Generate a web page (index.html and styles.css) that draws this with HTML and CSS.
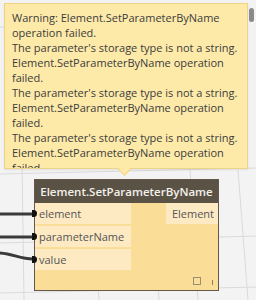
FILE: index.html
```html
<!DOCTYPE html>
<html lang="en">
<head>
  <meta charset="UTF-8" />
  <title>Element.SetParameterByName</title>
  <link rel="stylesheet" href="styles.css">
</head>
<body>
  <div class="canvas">
    <!-- grid + wires -->
    <svg class="wires" width="256" height="300" viewBox="0 0 256 300">
      <g stroke="#dadada" stroke-width="1" fill="none">
        <path d="M0 27 L4 27"/>
        <path d="M0 174 L256 168"/>
        <path d="M0 243 L256 236"/>
        <path d="M0 293 L256 287"/>
        <path d="M22 160 L24 300"/>
        <path d="M97 270 L99 300"/>
        <path d="M157 270 L159 300"/>
        <path d="M190 170 L198 300"/>
        <path d="M238 170 L248 300"/>
      </g>
      <g stroke="#3a3a3a" stroke-width="3" fill="none">
        <path d="M0 214 L33 214"/>
        <path d="M0 237 L33 237"/>
        <path d="M0 253 C14 254 20 259 33 259"/>
      </g>
    </svg>

    <div class="tooltip">
      <div class="tooltip-text">
        Warning: Element.SetParameterByName<br>
        operation failed.<br>
        The parameter's storage type is not a string.<br>
        Element.SetParameterByName operation<br>
        failed.<br>
        The parameter's storage type is not a string.<br>
        Element.SetParameterByName operation<br>
        failed.<br>
        The parameter's storage type is not a string.<br>
        Element.SetParameterByName operation<br>
        failed.
      </div>
      <div class="scroll-thumb"></div>
    </div>

    <div class="node">
      <div class="node-title">Element.SetParameterByName</div>
      <div class="node-body">
        <div class="inputs">
          <div class="port in">element</div>
          <div class="port in">parameterName</div>
          <div class="port in">value</div>
        </div>
        <div class="outputs">
          <div class="port out">Element</div>
        </div>
      </div>
      <div class="node-foot">
        <span class="preview-box"></span>
        <span class="lacing"></span>
      </div>
    </div>
  </div>
</body>
</html>
```

FILE: styles.css
```css
body {
  margin: 0;
  font-family: "Open Sans", "Liberation Sans", sans-serif;
  background: #f3f3f3;
}

.canvas {
  position: relative;
  width: 256px;
  height: 300px;
  overflow: hidden;
}

.wires {
  position: absolute;
  left: 0;
  top: 0;
}

.tooltip {
  position: absolute;
  left: 4px;
  top: 3px;
  width: 242px;
  height: 164px;
  background: #fdeaa9;
  border: 1px solid #efd384;
  box-shadow: 0 1px 2px rgba(0,0,0,0.08);
}

.tooltip::after {
  content: "";
  position: absolute;
  left: 115px;
  bottom: -6px;
  width: 8px;
  height: 8px;
  background: #fdeaa9;
  border-right: 1px solid #efd384;
  border-bottom: 1px solid #efd384;
  transform: rotate(45deg);
}

.tooltip-text {
  height: 158px;
  overflow: hidden;
  padding: 6px 0 0 7px;
  font-size: 11px;
  line-height: 15px;
  color: #3c3c3c;
  white-space: nowrap;
}

.scroll-thumb {
  position: absolute;
  right: -7px;
  top: 4px;
  width: 5px;
  height: 14px;
  background: #8a8a8a;
  border-radius: 3px;
}

.node {
  position: absolute;
  left: 34px;
  top: 179px;
  width: 183px;
  border: 1px solid #62594c;
  background: #fadd97;
}

.node-title {
  height: 23px;
  background: #5b5246;
  color: #f4f1ea;
  font-size: 11.5px;
  font-weight: 600;
  line-height: 23px;
  text-align: center;
  white-space: nowrap;
}

.node-body {
  display: flex;
  justify-content: space-between;
}

.inputs,
.outputs {
  display: flex;
  flex-direction: column;
  gap: 2px;
}

.port {
  height: 21px;
  line-height: 21px;
  font-size: 11px;
  color: #555;
  background: #fdeac3;
  white-space: nowrap;
}

.port.in {
  position: relative;
  width: 92px;
  padding-left: 4px;
}

.port.in::before {
  content: "";
  position: absolute;
  left: -3px;
  top: 7px;
  width: 5px;
  height: 7px;
  background: #111;
  border-radius: 0 4px 4px 0;
}

.port.out {
  width: 48px;
  padding-right: 4px;
  text-align: right;
}

.node-foot {
  height: 20px;
  display: flex;
  justify-content: flex-end;
  align-items: flex-end;
  gap: 11px;
  padding: 0 5px 5px 0;
  box-sizing: border-box;
}

.preview-box {
  width: 6px;
  height: 6px;
  border: 1px solid #9a8d73;
}

.lacing {
  width: 1px;
  height: 5px;
  background: #8c7f66;
}
```
